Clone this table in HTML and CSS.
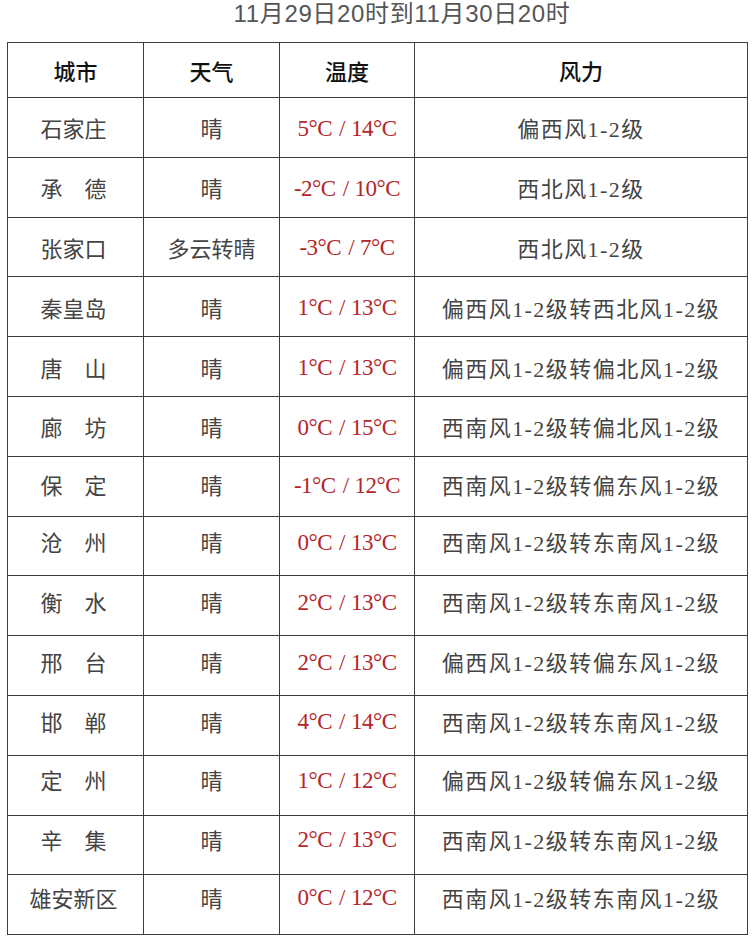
FILE: index.html
```html
<!DOCTYPE html>
<html lang="zh">
<head>
<meta charset="utf-8">
<link rel="stylesheet" href="styles.css">
</head>
<body>
<div class="title">11月29日20时到11月30日20时</div>
<table class="wx">
<colgroup><col class="c1"><col class="c2"><col class="c3"><col class="c4"></colgroup>
<thead>
<tr><th>城市</th><th>天气</th><th>温度</th><th>风力</th></tr>
</thead>
<tbody>
<tr><td class="city">石家庄</td><td>晴</td><td class="t">5°C<span class="s">/</span>14°C</td><td class="w">偏西风1-2级</td></tr>
<tr><td class="city">承　德</td><td>晴</td><td class="t">-2°C<span class="s">/</span>10°C</td><td class="w">西北风1-2级</td></tr>
<tr><td class="city">张家口</td><td>多云转晴</td><td class="t">-3°C<span class="s">/</span>7°C</td><td class="w">西北风1-2级</td></tr>
<tr><td class="city">秦皇岛</td><td>晴</td><td class="t">1°C<span class="s">/</span>13°C</td><td class="w">偏西风1-2级转西北风1-2级</td></tr>
<tr><td class="city">唐　山</td><td>晴</td><td class="t">1°C<span class="s">/</span>13°C</td><td class="w">偏西风1-2级转偏北风1-2级</td></tr>
<tr><td class="city">廊　坊</td><td>晴</td><td class="t">0°C<span class="s">/</span>15°C</td><td class="w">西南风1-2级转偏北风1-2级</td></tr>
<tr class="lo0"><td class="city">保　定</td><td>晴</td><td class="t">-1°C<span class="s">/</span>12°C</td><td class="w">西南风1-2级转偏东风1-2级</td></tr>
<tr class="lo1"><td class="city">沧　州</td><td>晴</td><td class="t">0°C<span class="s">/</span>13°C</td><td class="w">西南风1-2级转东南风1-2级</td></tr>
<tr class="lo1"><td class="city">衡　水</td><td>晴</td><td class="t">2°C<span class="s">/</span>13°C</td><td class="w">西南风1-2级转东南风1-2级</td></tr>
<tr class="lo1"><td class="city">邢　台</td><td>晴</td><td class="t">2°C<span class="s">/</span>13°C</td><td class="w">偏西风1-2级转偏东风1-2级</td></tr>
<tr class="lo1"><td class="city">邯　郸</td><td>晴</td><td class="t">4°C<span class="s">/</span>14°C</td><td class="w">西南风1-2级转东南风1-2级</td></tr>
<tr class="lo2"><td class="city">定　州</td><td>晴</td><td class="t">1°C<span class="s">/</span>12°C</td><td class="w">偏西风1-2级转偏东风1-2级</td></tr>
<tr class="lo2"><td class="city">辛　集</td><td>晴</td><td class="t">2°C<span class="s">/</span>13°C</td><td class="w">西南风1-2级转东南风1-2级</td></tr>
<tr class="lo3"><td class="city">雄安新区</td><td>晴</td><td class="t">0°C<span class="s">/</span>12°C</td><td class="w">西南风1-2级转东南风1-2级</td></tr>
</tbody>
</table>
</body>
</html>
```
FILE: styles.css
```css
html, body {
  margin: 0;
  padding: 0;
  background: #ffffff;
}
body {
  width: 752px;
  height: 949px;
  overflow: hidden;
  font-family: "Liberation Serif", "Noto Sans CJK SC", serif;
  color: #3a3a3a;
}
.title {
  height: 42px;
  box-sizing: border-box;
  padding-left: 52px;
  text-align: center;
  font-family: "Liberation Sans", "Noto Sans CJK SC", sans-serif;
  font-size: 24px;
  line-height: 28px;
  color: #555555;
  letter-spacing: 0.65px;
}
.wx {
  margin-left: 7px;
  width: 740px;
  border-collapse: collapse;
  table-layout: fixed;
}
.c1 { width: 136px; }
.c2 { width: 136px; }
.c3 { width: 135px; }
.c4 { width: 333px; }
.wx th, .wx td {
  border: 1.5px solid #3c3c3c;
  text-align: center;
  padding: 0;
}
.wx th {
  height: 54px;
  font-family: "Noto Sans CJK SC", sans-serif;
  font-weight: 500;
  font-size: 22px;
  color: #111111;
}
.wx td {
  height: 59.8px;
  font-size: 22px;
  color: #444444;
  box-sizing: border-box;
}
.wx td.city {
  padding-right: 4px;
}
.wx td.w {
  letter-spacing: 1.45px;
}
.wx td.t {
  color: #b3262b;
  font-size: 23px;
  letter-spacing: -0.5px;
  padding-top: 3px;
}
.wx td.t .s {
  margin: 0 6px 0 7px;
}
.wx tr.lo0 td {
  padding-bottom: 4px;
}
.wx tr.lo1 td {
  padding-bottom: 9px;
}
.wx tr.lo2 td {
  padding-bottom: 12px;
}
.wx tr.lo3 td {
  padding-bottom: 16px;
}
```
